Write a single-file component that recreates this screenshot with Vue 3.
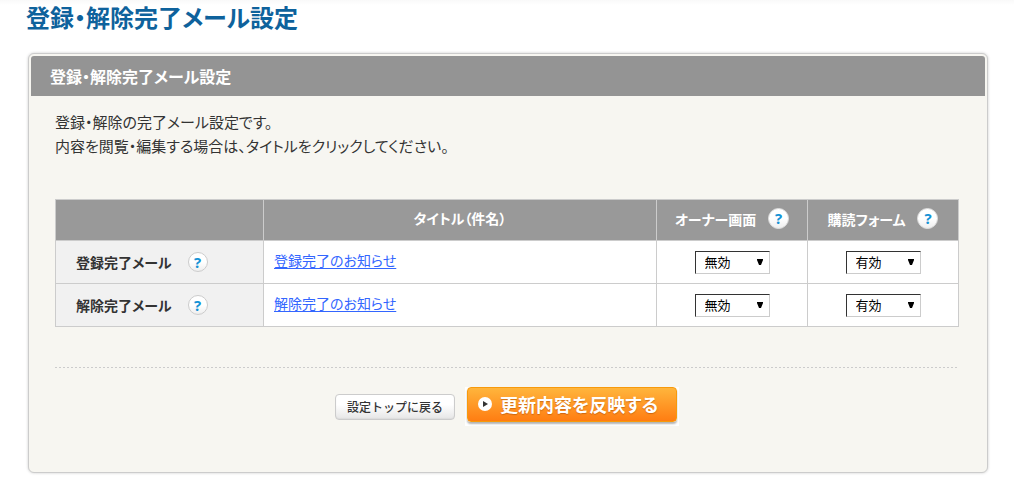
<script setup>
import { ref } from 'vue'

const rows = ref([
  { id: 'register', label: '登録完了メール', title: '登録完了のお知らせ', owner: '無効', form: '有効' },
  { id: 'cancel', label: '解除完了メール', title: '解除完了のお知らせ', owner: '無効', form: '有効' },
])
const states = ['有効', '無効']
const columns = [
  { key: 'owner', label: 'オーナー画面' },
  { key: 'form', label: '購読フォーム' },
]
</script>

<template>
  <main class="page">
    <h1 class="page-title">登録・解除完了メール設定</h1>
    <section class="panel">
      <h2 class="panel-title">登録・解除完了メール設定</h2>
      <form class="panel-body" @submit.prevent>
        <p class="lead">登録・解除の完了メール設定です。<br>内容を閲覧・編集する場合は、タイトルをクリックしてください。</p>
        <table class="mails">
          <colgroup>
            <col class="col-name">
            <col>
            <col class="col-state">
            <col class="col-state">
          </colgroup>
          <thead>
            <tr>
              <th></th>
              <th scope="col">タイトル（件名）</th>
              <th v-for="c in columns" :key="c.key" scope="col">
                <span class="with-help">
                  {{ c.label }}
                  <button type="button" class="help" :aria-label="c.label + 'のヘルプ'">?</button>
                </span>
              </th>
            </tr>
          </thead>
          <tbody>
            <tr v-for="row in rows" :key="row.id">
              <th scope="row">
                <span class="with-help name">
                  {{ row.label }}
                  <button type="button" class="help small" :aria-label="row.label + 'のヘルプ'">?</button>
                </span>
              </th>
              <td><a href="#">{{ row.title }}</a></td>
              <td v-for="c in columns" :key="c.key" class="state">
                <span class="select">
                  <select v-model="row[c.key]" :aria-label="row.label + ' ' + c.label">
                    <option v-for="s in states" :key="s">{{ s }}</option>
                  </select>
                  <svg class="arrow" viewBox="0 0 6 6" aria-hidden="true"><path d="M0 0h6v1L4 6H2L0 1z" /></svg>
                </span>
              </td>
            </tr>
          </tbody>
        </table>
        <div class="actions">
          <button type="button" class="back">設定トップに戻る</button>
          <span class="submit-base">
            <button type="submit" class="submit">
              <svg viewBox="0 0 14 14" aria-hidden="true">
                <circle cx="7" cy="7" r="7" fill="#fff" />
                <path d="M5 4l5 3-5 3z" fill="#333" />
              </svg>
              更新内容を反映する
            </button>
          </span>
        </div>
      </form>
    </section>
  </main>
</template>

<style>
body {
  margin: 0;
  background: #fff;
}
</style>

<style scoped>
.page {
  box-sizing: border-box;
  padding: 2px 26px 15px;
  font-family: "Noto Sans CJK JP", sans-serif;
  font-feature-settings: "palt";
  color: #333;
  background: linear-gradient(#f9f9f9, #fff 5px);
}
.page * {
  box-sizing: border-box;
}
.page-title {
  margin: 0 0 21px;
  font-size: 24px;
  line-height: 30px;
  font-weight: 700;
  color: #0e629c;
}
.panel {
  margin-left: 2px;
  padding: 2px;
  border: 1px solid #ccc;
  border-radius: 6px;
  background: #f7f6f1;
  box-shadow: 0 0 3px rgba(0, 0, 0, 0.2);
}
.panel-title {
  margin: 0;
  padding: 0 19px;
  border-radius: 3px 3px 0 0;
  background: #949494;
  color: #fff;
  font-size: 16px;
  line-height: 40px;
  font-weight: 700;
}
.panel-body {
  padding: 14px 26px 44px 24px;
}
.lead {
  margin: 0 0 41px;
  font-size: 15px;
  line-height: 24px;
}
.mails {
  width: 100%;
  table-layout: fixed;
  border-collapse: collapse;
  font-size: 14px;
  line-height: 20px;
}
.col-name {
  width: 208px;
}
.col-state {
  width: 151px;
}
.mails th,
.mails td {
  height: 43px;
  padding: 0 10px;
  border: 1px solid #ccc;
}
.mails td {
  padding-bottom: 4px;
  background: #fff;
}
.mails thead th {
  height: 41px;
  padding-bottom: 4px;
  background: #999;
  color: #fff;
  font-weight: 700;
}
.mails tbody th {
  padding-left: 20px;
  padding-bottom: 2px;
  background: #f1f1f1;
  text-align: left;
  font-weight: 700;
}
.mails a {
  color: #36f;
  text-underline-offset: 2px;
}
.with-help {
  display: inline-flex;
  align-items: center;
  gap: 12px;
  white-space: nowrap;
  vertical-align: middle;
}
.name {
  gap: 16px;
}
.help {
  width: 21px;
  height: 21px;
  padding: 0;
  border: 1px solid #ddd;
  border-radius: 50%;
  background: linear-gradient(#fff 50%, #eee);
  color: #1593d6;
  font: 700 15px/19px "Noto Sans", sans-serif;
  text-align: center;
}
.small {
  width: 20px;
  height: 20px;
  border-color: #ccc;
  line-height: 18px;
}
.mails .state {
  padding-bottom: 0;
  text-align: center;
}
.select {
  position: relative;
  display: inline-block;
  vertical-align: middle;
}
.select select {
  display: block;
  width: 75px;
  height: 23px;
  padding: 0 20px 0 9px;
  appearance: none;
  border: 1px solid #ccc;
  border-top-color: #333;
  border-left-color: #333;
  border-radius: 0;
  background: #fff;
  color: #000;
  font: 13px/20px "Noto Sans CJK JP", sans-serif;
}
.arrow {
  position: absolute;
  top: 8px;
  right: 7px;
  width: 6px;
  height: 6px;
  pointer-events: none;
}
.actions {
  display: flex;
  justify-content: center;
  align-items: center;
  gap: 10px;
  margin-top: 40px;
  padding-top: 20px;
  background: repeating-linear-gradient(90deg, #ccc 0 2px, transparent 2px 4px) top / 100% 1px no-repeat;
}
.back {
  width: 120px;
  height: 26px;
  padding: 0;
  border: 1px solid #ccc;
  border-radius: 4px;
  background: linear-gradient(#fff 40%, #e6e6e6);
  box-shadow: inset 0 -1px 1px #ddd;
  color: #333;
  font: 500 12px/22px "Noto Sans CJK JP", sans-serif;
}
.submit-base {
  padding: 0 2px 4px;
  background: #fff;
}
.submit {
  display: flex;
  align-items: center;
  gap: 8px;
  width: 210px;
  height: 35px;
  padding: 0 10px 2px;
  border: 1px solid #f79a0c;
  border-radius: 4px;
  background: linear-gradient(#ffb53c, #ff7d12);
  box-shadow: 0 2px 2px rgba(0, 0, 0, 0.3);
  color: #fff;
  font: 700 18px/30px "Noto Sans CJK JP", sans-serif;
  font-feature-settings: "palt";
  text-shadow: 0 1px 1px rgba(160, 70, 0, 0.5);
  white-space: nowrap;
}
.submit svg {
  flex: none;
  width: 14px;
  height: 14px;
}
</style>
